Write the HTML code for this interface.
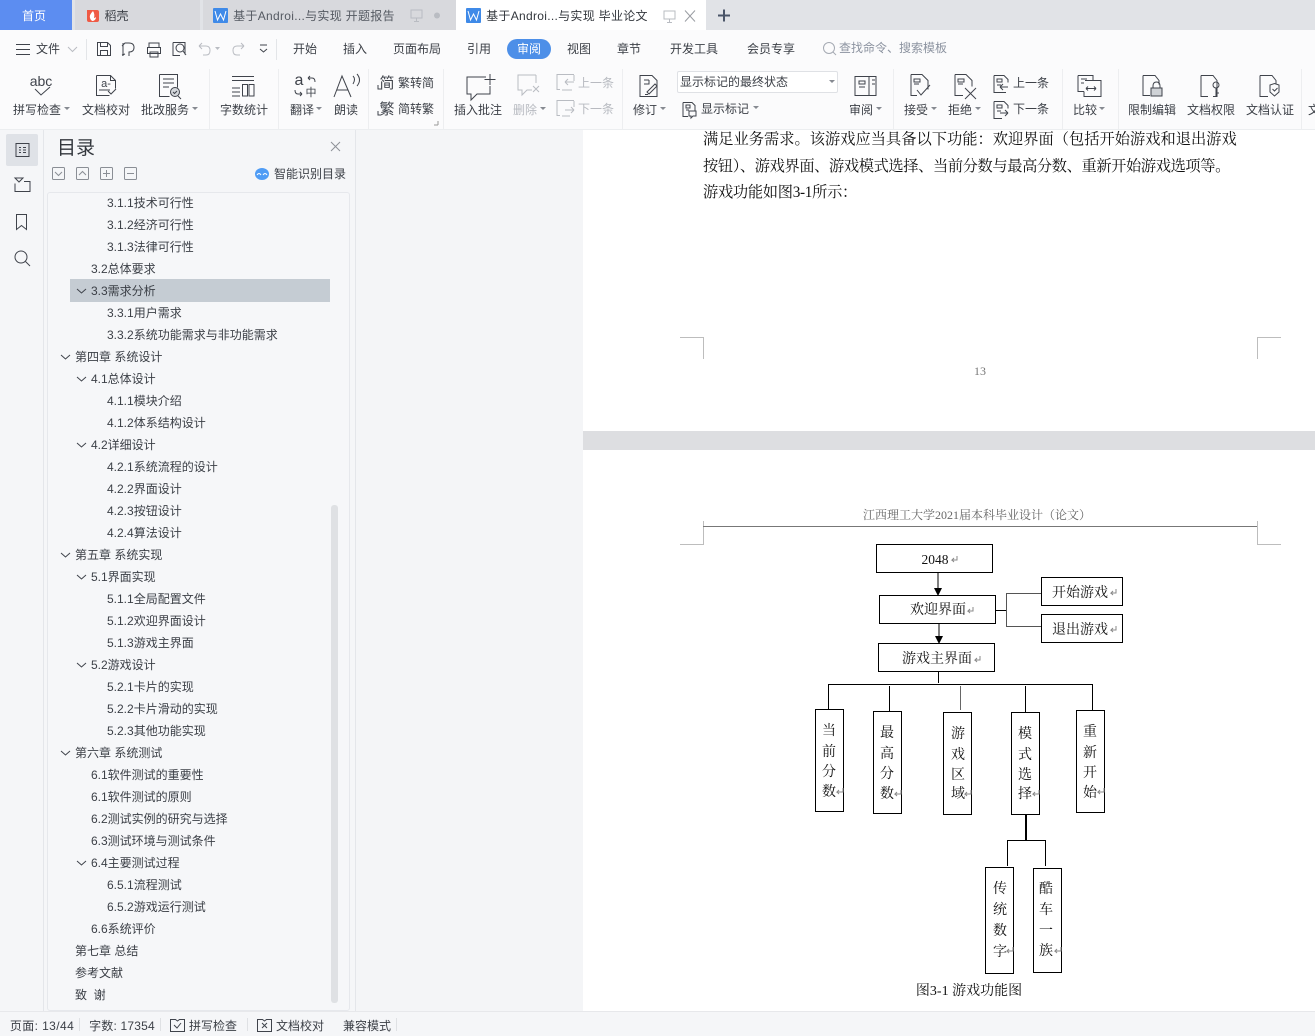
<!DOCTYPE html>
<html lang="zh-CN"><head><meta charset="utf-8"><title>WPS</title>
<style>
*{box-sizing:border-box}
html,body{margin:0;padding:0;width:1315px;height:1036px;overflow:hidden;background:#f4f5f7}
body{position:relative;font-family:"Liberation Sans","Noto Sans CJK SC",sans-serif;font-size:12px;color:#3b3f46}
.a{position:absolute}
.r{position:absolute;height:22px;line-height:22px;font-size:12px;white-space:pre;color:#3b3f46;margin-top:1px}
.p{position:absolute;left:703px;font-family:"Liberation Serif","Noto Serif CJK SC",serif;font-size:15.25px;line-height:26px;color:#111;white-space:pre}
svg{position:absolute;left:0;top:0}
svg text{font-family:"Liberation Sans","Noto Sans CJK SC",sans-serif}
.u text{font-size:12px;fill:#3b3f46;text-anchor:middle}
.d text{font-family:"Liberation Serif","Noto Serif CJK SC",serif;font-size:14px;fill:#111;text-anchor:middle}
.i{fill:none;stroke:#3f434b;stroke-width:1}
.g{fill:none;stroke:#b9bcc2;stroke-width:1}
</style></head><body>

<!-- document -->
<div class="a" style="left:356px;top:130px;width:227px;height:881px;background:#f4f5f7"></div>
<div class="a" style="left:583px;top:130px;width:732px;height:301px;background:#fff"></div>
<div class="a" style="left:583px;top:431px;width:732px;height:19px;background:#dddee1"></div>
<div class="a" style="left:583px;top:450px;width:732px;height:561px;background:#fff"></div>
<div class="p" style="top:127px">满足业务需求。该游戏应当具备以下功能：欢迎界面（包括开始游戏和退出游戏</div>
<div class="p" style="top:154px;letter-spacing:-0.4px">按钮）、游戏界面、游戏模式选择、当前分数与最高分数、重新开始游戏选项等。</div>
<div class="p" style="top:180px;letter-spacing:-0.3px">游戏功能如图3-1所示：</div>
<div class="a" style="left:970px;top:364px;width:20px;text-align:center;font:12px 'Liberation Serif',serif;color:#777">13</div>
<div class="a" style="left:780px;top:506px;width:394px;text-align:center;font:12px 'Liberation Serif','Noto Serif CJK SC',serif;color:#666">江西理工大学2021届本科毕业设计（论文）</div>

<svg class="d" width="1315" height="1036" viewBox="0 0 1315 1036">
<g fill="none" stroke="#bdbdbd">
<path d="M680 337.500H703.500V359M1281 337.500H1257.500V359M680 544.500H703.500V521M1281 544.500H1257.500V521"/>
</g>
<path d="M703 526.500H1257" stroke="#777" fill="none"/>
<g fill="#fff" stroke="#000">
<rect x="876.500" y="544.500" width="116" height="28"/>
<rect x="879.500" y="595.500" width="116" height="28"/>
<rect x="878.500" y="643.500" width="116" height="28"/>
<rect x="1041.500" y="577.500" width="81" height="28"/>
<rect x="1041.500" y="614.500" width="81" height="28"/>
<rect x="815.500" y="709.500" width="28" height="102"/>
<rect x="873.500" y="711.500" width="28" height="102"/>
<rect x="943.500" y="712.500" width="28" height="102"/>
<rect x="1011.500" y="712.500" width="28" height="102"/>
<rect x="1076.500" y="710.500" width="28" height="102"/>
<rect x="985.500" y="867.500" width="28" height="106"/>
<rect x="1033.500" y="868.500" width="28" height="104"/>
</g>
<g fill="none" stroke="#000">
<path d="M938 572.500V588M939 623.500V636M938.500 671.500V683M828 684.500H1092.500M828.500 684V709M889.500 686V711M1025.500 686V712M1092.500 684V710"/>
<path d="M960.500 686V710" stroke="#666"/>
<path d="M996 610.500H1007" />
<path d="M1041 593.500H1006.500V626.500H1041" stroke="#555"/>
<path d="M1026 814V840" stroke-width="2"/>
<path d="M1007.500 866V840.500H1045.500V866"/>
</g>
<path d="M934 588h8l-4 8zM935 636h8l-4 8z" fill="#000"/>
<text x="935" y="564" style="font-size:13.500px">2048</text>
<text x="938" y="614">欢迎界面</text>
<text x="937" y="663">游戏主界面</text>
<text x="1080" y="597">开始游戏</text>
<text x="1080" y="634">退出游戏</text>
<g>
<text x="829" y="735">当</text><text x="829" y="756">前</text><text x="829" y="776">分</text><text x="829" y="796">数</text>
<text x="887" y="737">最</text><text x="887" y="758">高</text><text x="887" y="778">分</text><text x="887" y="798">数</text>
<text x="958" y="738">游</text><text x="958" y="759">戏</text><text x="958" y="779">区</text><text x="958" y="798">域</text>
<text x="1025" y="738">模</text><text x="1025" y="759">式</text><text x="1025" y="779">选</text><text x="1025" y="798">择</text>
<text x="1090" y="736">重</text><text x="1090" y="757">新</text><text x="1090" y="777">开</text><text x="1090" y="797">始</text>
<text x="1000" y="893">传</text><text x="1000" y="914">统</text><text x="1000" y="935">数</text><text x="1000" y="956">字</text>
<text x="1046" y="893">酷</text><text x="1046" y="914">车</text><text x="1046" y="935">一</text><text x="1046" y="955">族</text>
</g>
<text x="969" y="995">图3-1 游戏功能图</text>
<g fill="none" stroke="#888">
<path d="M957 556v4h-5l2-2m-2 2l2 2"/>
<path d="M973 607v4h-5l2-2m-2 2l2 2M980 656v4h-5l2-2m-2 2l2 2M1116 589v4h-5l2-2m-2 2l2 2M1116 626v4h-5l2-2m-2 2l2 2M843 788v4h-6l2-2m-2 2l2 2M901 790v4h-6l2-2m-2 2l2 2M971 790v4h-6l2-2m-2 2l2 2M1039 790v4h-6l2-2m-2 2l2 2M1104 788v4h-6l2-2m-2 2l2 2M1013 947v4h-6l2-2m-2 2l2 2M1061 947v4h-6l2-2m-2 2l2 2"/>
</g>
</svg>

<!-- left panel -->
<div class="a" style="left:0;top:130px;width:356px;height:881px;background:#f5f6f8"></div>
<div class="a" style="left:43px;top:130px;width:1px;height:881px;background:#e4e6ea"></div>
<div class="a" style="left:355px;top:130px;width:1px;height:881px;background:#e4e6ea"></div>
<div class="a" style="left:6px;top:134px;width:32px;height:32px;border-radius:2px;background:#dfe2e7"></div>
<div class="a" style="left:57px;top:135px;font-size:19px;line-height:28px;color:#33373d">目录</div>
<div class="a" style="left:274px;top:166px;font-size:12px;line-height:17px;color:#3b3f46">智能识别目录</div>
<div class="a" style="left:47px;top:192px;width:303px;height:819px;background:#f6f7f9;border:1px solid #e6e8ec;border-radius:3px"></div>
<div class="a" style="left:70px;top:279px;width:260px;height:23px;background:#c5ccd3"></div>
<div class="a" style="left:331px;top:505px;width:7px;height:498px;background:#dfe1e4;border-radius:3px"></div>

<div class="r" style="left:107px;top:191px">3.1.1技术可行性</div>
<div class="r" style="left:107px;top:213px">3.1.2经济可行性</div>
<div class="r" style="left:107px;top:235px">3.1.3法律可行性</div>
<div class="r" style="left:91px;top:257px">3.2总体要求</div>
<div class="r" style="left:91px;top:279px">3.3需求分析</div>
<div class="r" style="left:107px;top:301px">3.3.1用户需求</div>
<div class="r" style="left:107px;top:323px">3.3.2系统功能需求与非功能需求</div>
<div class="r" style="left:75px;top:345px">第四章 系统设计</div>
<div class="r" style="left:91px;top:367px">4.1总体设计</div>
<div class="r" style="left:107px;top:389px">4.1.1模块介绍</div>
<div class="r" style="left:107px;top:411px">4.1.2体系结构设计</div>
<div class="r" style="left:91px;top:433px">4.2详细设计</div>
<div class="r" style="left:107px;top:455px">4.2.1系统流程的设计</div>
<div class="r" style="left:107px;top:477px">4.2.2界面设计</div>
<div class="r" style="left:107px;top:499px">4.2.3按钮设计</div>
<div class="r" style="left:107px;top:521px">4.2.4算法设计</div>
<div class="r" style="left:75px;top:543px">第五章 系统实现</div>
<div class="r" style="left:91px;top:565px">5.1界面实现</div>
<div class="r" style="left:107px;top:587px">5.1.1全局配置文件</div>
<div class="r" style="left:107px;top:609px">5.1.2欢迎界面设计</div>
<div class="r" style="left:107px;top:631px">5.1.3游戏主界面</div>
<div class="r" style="left:91px;top:653px">5.2游戏设计</div>
<div class="r" style="left:107px;top:675px">5.2.1卡片的实现</div>
<div class="r" style="left:107px;top:697px">5.2.2卡片滑动的实现</div>
<div class="r" style="left:107px;top:719px">5.2.3其他功能实现</div>
<div class="r" style="left:75px;top:741px">第六章 系统测试</div>
<div class="r" style="left:91px;top:763px">6.1软件测试的重要性</div>
<div class="r" style="left:91px;top:785px">6.1软件测试的原则</div>
<div class="r" style="left:91px;top:807px">6.2测试实例的研究与选择</div>
<div class="r" style="left:91px;top:829px">6.3测试环境与测试条件</div>
<div class="r" style="left:91px;top:851px">6.4主要测试过程</div>
<div class="r" style="left:107px;top:873px">6.5.1流程测试</div>
<div class="r" style="left:107px;top:895px">6.5.2游戏运行测试</div>
<div class="r" style="left:91px;top:917px">6.6系统评价</div>
<div class="r" style="left:75px;top:939px">第七章 总结</div>
<div class="r" style="left:75px;top:961px">参考文献</div>
<div class="r" style="left:75px;top:983px">致  谢</div>

<!-- top bars -->
<div class="a" style="left:0;top:0;width:1315px;height:30px;background:#e1e3e7"></div>
<div class="a" style="left:0;top:0;width:72px;height:30px;background:#5c8df1"></div>
<div class="a" style="left:75px;top:0;width:125px;height:30px;background:#d8d9dd"></div>
<div class="a" style="left:203px;top:0;width:253px;height:30px;background:#d8d9dd"></div>
<div class="a" style="left:456px;top:0;width:250px;height:30px;background:#fff"></div>
<div class="a" style="left:0;top:30px;width:1315px;height:100px;background:#fbfbfc;border-bottom:1px solid #eceef0"></div>
<div class="a" style="left:507px;top:39px;width:44px;height:20px;border-radius:10px;background:#4d8fe8"></div>
<div class="a" style="left:677px;top:71px;width:161px;height:22px;background:#fff;border:1px solid #dfe1e5;border-radius:2px"></div>
<div class="a" style="left:0;top:1011px;width:1315px;height:25px;background:#f5f6f8;border-top:1px solid #e7e8eb"></div>

<svg class="u" width="1315" height="1036" viewBox="0 0 1315 1036">
<!-- tabs -->
<text x="34" y="20" style="fill:#fff">首页</text>
<path d="M87 10h10q2 0 2 2v8q0 2-2 2h-8q-2 0-2-2z" fill="#ef5a45"/><path d="M93 11q-4 4-3 7t3 3q3-1 3-4-1 1-2 1 1-4-1-7z" fill="#fff"/>
<text x="116.500" y="20">稻壳</text>
<rect x="213" y="8" width="15" height="15" rx="1" fill="#3f8ae8"/><path d="M215 11l2.500 9 3-6 3 6 2.500-9" fill="none" stroke="#fff"/>
<text x="314" y="20" style="fill:#555a62;letter-spacing:.3px">基于Androi...与实现 开题报告</text>
<path class="g" d="M411 10h11v8h-11zM416.500 18v3M414 21.500h5"/><circle cx="437" cy="15.500" r="3" fill="#b9bcc2"/>
<rect x="466" y="8" width="15" height="15" rx="1" fill="#3f8ae8"/><path d="M468 11l2.500 9 3-6 3 6 2.500-9" fill="none" stroke="#fff"/>
<text x="567" y="20" style="fill:#33373d;letter-spacing:.3px">基于Androi...与实现 毕业论文</text>
<path class="g" d="M664 11h11v8h-11zM669.500 19v3M667 22.500h5"/>
<path d="M685 10.500l10 11m0-11l-10 11" fill="none" stroke="#9a9da3"/>
<path d="M718 15.500h12M724 9.500v12" fill="none" stroke="#4a5568" stroke-width="2"/>

<!-- quick bar -->
<path class="i" d="M16 44.500h14M16 49.500h14M16 54.500h14"/>
<text x="48" y="53">文件</text>
<path class="g" d="M68 47l4.500 4.500 4.500-4.500"/>
<path d="M86.500 39v21M276.500 39v21" stroke="#e3e5e8"/>
<path class="i" d="M97.500 42.500h10l3 3v10h-13zM100.500 42.500v4h7v-4M100.500 55.500v-5h7v5"/>
<path class="i" d="M122 46l3-3h4q5 0 5 4.500t-5 4.500v4M123 43l0 13M122 55l3-1"/>
<path class="i" d="M149 47v-4h10v4M147.500 47.500h13v6h-13zM150 52h8v5h-8z"/>
<path class="i" d="M173 42.500h12v12M173 42.500v13h7"/><circle class="i" cx="180" cy="48" r="4"/><path class="i" d="M183 51l3 4"/>
<path class="g" d="M199 46h7q4 0 4 4.500t-4 4.500h-3M199 46l3-3M199 46l3 3"/><path d="M215 47h5l-2.500 3z" fill="#b9bcc2"/>
<path class="g" d="M244 46h-7q-4 0-4 4.500t4 4.500h3M244 46l-3-3M244 46l-3 3"/>
<path class="i" d="M260 45h7M260 49l3.500 3 3.500-3"/>

<!-- menu -->
<text x="305" y="53">开始</text><text x="355" y="53">插入</text><text x="417" y="53">页面布局</text><text x="479" y="53">引用</text>
<text x="529" y="53" style="fill:#fff">审阅</text>
<text x="579" y="53">视图</text><text x="629" y="53">章节</text><text x="694" y="53">开发工具</text><text x="771" y="53">会员专享</text>
<circle class="g" cx="829" cy="48" r="5.500" style="stroke:#a5aab3"/><path d="M833 52l3 3" stroke="#a5aab3" fill="none"/>
<text x="893" y="52" style="fill:#8c93a0">查找命令、搜索模板</text>

<!-- separators -->
<path d="M209.500 69v60M278.500 69v60M368.500 69v60M443.500 69v60M622.500 69v60M893.500 69v60M1062.500 69v60M1118.500 69v60M1301.500 69v60" stroke="#edeef0"/>

<!-- labels -->
<text x="37" y="114">拼写检查</text><text x="106" y="114">文档校对</text><text x="165" y="114">批改服务</text><text x="244" y="114">字数统计</text>
<text x="302" y="114">翻译</text><text x="346" y="114">朗读</text>
<text x="416" y="87">繁转简</text><text x="416" y="113">简转繁</text>
<text x="478" y="114">插入批注</text><text x="525" y="114" style="fill:#b7bac0">删除</text>
<text x="596" y="87" style="fill:#b7bac0">上一条</text><text x="596" y="113" style="fill:#b7bac0">下一条</text>
<text x="645" y="114">修订</text>
<text x="734" y="86" style="fill:#3b3f46">显示标记的最终状态</text>
<text x="725" y="113">显示标记</text>
<text x="861" y="114">审阅</text><text x="916" y="114">接受</text><text x="960" y="114">拒绝</text>
<text x="1031" y="87">上一条</text><text x="1031" y="113">下一条</text>
<text x="1085" y="114">比较</text><text x="1152" y="114">限制编辑</text><text x="1211" y="114">文档权限</text><text x="1270" y="114">文档认证</text>
<text x="1314" y="114">文</text>
<!-- carets -->
<path d="M64 107h6l-3 3zM192 107h6l-3 3zM316 107h6l-3 3zM540 107h6l-3 3zM660 107h6l-3 3zM753 106h6l-3 3zM829 80h6l-3 3zM876 107h6l-3 3zM931 107h6l-3 3zM975 107h6l-3 3zM1099 107h6l-3 3z" fill="#868a91"/>
<path d="M438 125h-4M438 125v-4" stroke="#999" fill="none"/>

<!-- icons -->
<text x="41" y="86" style="font-size:14px;fill:#3f434b">abc</text>
<path class="i" d="M35 89l6 6 9-8"/>
<path class="i" d="M96.500 75.500h14l5 5v8M96.500 75.500v20h13M110.500 75.500v5h5"/><text x="106" y="87" style="font-size:11px;fill:#3f434b">a-</text><path class="i" d="M108 91l3 3 5-5"/><path class="i" d="M110 90h-11"/>
<path class="i" d="M159.500 74.500h18v13M159.500 74.500v22h10M163 79h11M163 83h11M163 87h6"/><circle cx="175" cy="92" r="4.500" fill="#d5d8dc" stroke="#3f434b"/><path class="i" d="M173 92l1.500 1.500 2.500-2.500M178 96l3 3"/>
<path class="i" d="M232 76.500h22M232 80.500h22M232 88h8M232 92h8M232 96h8M242.500 84.500h5v11.500h-5zM249 84.500h5v11.500h-5z"/>
<text x="299" y="85" style="font-size:16px;fill:#3f434b">a</text><text x="311" y="96" style="font-size:11px;fill:#3f434b">中</text>
<path class="i" d="M308 78h4q3 0 3 4M308 78l2-2M308 78l2 2M295 90q0 4 3 4h4M302 94l-2-2M302 94l-2 2"/>
<path class="i" d="M334 97l8-21 9 21M337 90h11M353 76q3 3 0 8M357 74q5 6 0 12"/>
<text x="387" y="88" style="font-size:15px;fill:#3f434b">简</text><text x="387" y="114" style="font-size:15px;fill:#3f434b">繁</text>
<path class="i" d="M378 85v4h3M378 111v4h3"/>
<path class="i" d="M486 77h-19v17h4v6l6-6h13v-8M490 74v11M484.500 79.500h11"/>
<path class="g" d="M536 75h-18v15h4v5l5-5h5M536 75v8M533 86l6 6m0-6l-6 6"/>
<path class="g" d="M574 74.500h-17v15h3M574 75v6M574 82h-9M565 82l3-3M565 82l3 3M562 90h10"/>
<path class="g" d="M574 100.500h-17v15h3M574 101v6M574 110h-9M574 110l-3-3M574 110l-3 3M562 116h8"/>
<path class="i" d="M640 75.500h12l5 5v16h-17zM644 80h5M644 84h5v-4"/><path class="i" d="M647 92l8-8 2 2-8 8zM645 94.500h3"/>
<path class="i" d="M683 102.500h9l3 3v5M683 102.500v14h5M686 105h4v3h-4zM686 110h3"/><path class="i" d="M689 111h7v5h-3l-2 2v-2h-2z"/>
<path class="i" d="M855 76.500h21v19h-21zM869 76.500v19M859 81h6v3h-6zM859 87h6M872 80h3M872 84h3"/>
<path class="i" d="M911 74.500h11l6 6v9M911 74.500v21h6M914 79h6v3h-6zM914 84h5"/><path class="i" d="M917 90l4 5 9-10"/>
<path class="i" d="M955 74.500h11l6 6v6M955 74.500v21h8M958 79h6v3h-6zM958 84h5"/><path class="i" d="M965 88l11 11m0-11l-11 11"/>
<path class="i" d="M994 75.500h10l4 4v3M994 75.500v17h12M997 79h5v3h-5zM997 85h4"/><path class="i" d="M1008 87h-8M1000 87l3-3M1000 87l3 3"/>
<path class="i" d="M994 101.500h10l4 4v3M994 101.500v17h8M997 105h5v3h-5zM997 111h4"/><path class="i" d="M1000 113h8M1008 113l-3-3M1008 113l-3 3"/>
<path class="i" d="M1078 75.500h15v5M1078 75.500v16h6M1081 79h6M1081 83h3M1085 80.500h16v16h-17v-5"/><path class="i" d="M1086 88.500h10M1086 88.500l2-2M1086 88.500l2 2M1096 88.500l-2-2M1096 88.500l-2 2"/>
<path class="i" d="M1143 75.500h12l4 5v4M1143 75.500v20h7"/><rect x="1151" y="88" width="11" height="8" fill="#cfd2d6" stroke="#3f434b"/><path class="i" d="M1153 88v-2q0-4 3.500-4t3.500 4v2"/>
<path class="i" d="M1201 75.500h12l4 5v16h-4M1201 75.500v21h7"/><circle class="i" cx="1216" cy="85" r="3"/><path class="i" d="M1216 88v8M1216 93h3"/>
<path class="i" d="M1260 75.500h12l4 5v3M1260 75.500v21h8"/><path class="i" d="M1270 85l4.500-1.500 4.500 1.500v7l-4.500 4-4.500-4zM1272.500 89l2 2 3-3"/>

<!-- sidebar icons -->
<path class="i" d="M16 143.500h13v13h-13zM19 147.500h2M23 147.500h3M19 150h2M23 150h3M19 152.500h2M23 152.500h3" />
<path class="i" d="M15 178h8l-4 4zM24 181.500h6v10h-15v-8"/>
<path class="i" d="M16.500 214.500h10v15l-5-4-5 4z"/>
<circle class="i" cx="21" cy="257" r="6"/><path class="i" d="M25.500 261.500l4.500 4.500"/>
<!-- panel icons -->
<path d="M331 142l9 9m0-9l-9 9" stroke="#8d9198" fill="none"/>
<g fill="none" stroke="#8a8e95"><rect x="52.500" y="167.500" width="12" height="12" rx="1"/><path d="M55 172l3.500 3.500 3.500-3.500"/>
<rect x="76.500" y="167.500" width="12" height="12" rx="1"/><path d="M79 175l3.500-3.500 3.500 3.500"/>
<rect x="100.500" y="167.500" width="12" height="12" rx="1"/><path d="M103 173.500h7M106.500 170v7"/>
<rect x="124.500" y="167.500" width="12" height="12" rx="1"/><path d="M127 173.500h7"/></g>
<ellipse cx="262" cy="174" rx="7" ry="6" fill="#4f9cf5"/><path d="M257 175q2-3 4 0M263 175q2-3 4 0" fill="none" stroke="#fff"/>
<!-- toc chevrons -->
<path class="i" d="M77 289l4.500 4 4.500-4M61 355l4.500 4 4.500-4M77 377l4.500 4 4.500-4M77 443l4.500 4 4.500-4M61 553l4.500 4 4.500-4M77 575l4.500 4 4.500-4M77 663l4.500 4 4.500-4M61 751l4.500 4 4.500-4M77 861l4.500 4 4.500-4"/>
<!-- status -->
<path d="M79.500 1018v13M160.500 1018v13M247.500 1018v13M396.500 1018v13" stroke="#dfe1e4"/>
<text x="42" y="1030" style="letter-spacing:.4px">页面: 13/44</text>
<text x="122" y="1030" style="letter-spacing:.2px">字数: 17354</text>
<path class="i" d="M170.500 1019.500h5l2 1.500 2-1.500h5v12h-14z"/><path class="i" d="M174 1025l3 3 4-5"/>
<text x="213" y="1030">拼写检查</text>
<path class="i" d="M257.500 1019.500h5l2 1.500 2-1.500h5v12h-14z"/><path class="i" d="M262 1023l5 5m0-5l-5 5"/>
<text x="300" y="1030">文档校对</text>
<text x="367" y="1030">兼容模式</text>
</svg>
</body></html>
